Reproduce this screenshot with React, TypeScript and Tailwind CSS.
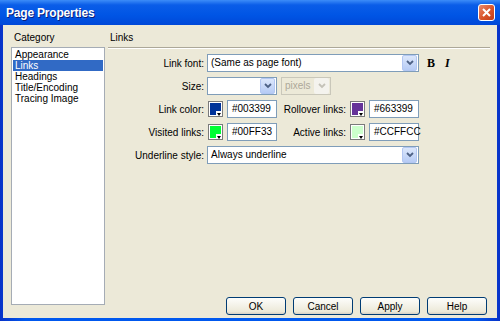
import React from 'react';

const FONT = { fontFamily: '"Liberation Sans", Arial, sans-serif' };

const CATEGORIES = ['Appearance', 'Links', 'Headings', 'Title/Encoding', 'Tracing Image'];

function Chevron({ disabled }: { disabled?: boolean }) {
  return (
    <svg width="8" height="6" viewBox="0 0 8 6">
      <path d="M1 1 L4 4 L7 1" fill="none" stroke={disabled ? '#c4c2b8' : '#4d6185'} strokeWidth="1.8" />
    </svg>
  );
}

function Select({ w, value, disabled }: { w: string; value?: string; disabled?: boolean }) {
  return (
    <div
      className={`${w} h-[18px] flex items-center border ${
        disabled ? 'border-[#c9c7ba] bg-[#ECE9D8] text-[#aca899]' : 'border-[#7f9db9] bg-white text-black'
      }`}
    >
      <span className="flex-1 pl-[3px] truncate leading-none">{value}</span>
      <span
        className={`w-[15px] h-[16px] mr-px flex items-center justify-center rounded-[2px] ${
          disabled ? 'bg-[#f4f3ee]' : 'bg-[linear-gradient(#dce7fb,#b6cbf5)] border border-[#b3c7f2]'
        }`}
      >
        <Chevron disabled={disabled} />
      </span>
    </div>
  );
}

function Swatch({ color }: { color: string }) {
  return (
    <div className="relative w-[15px] h-[16px] border border-[#7a7a7a] bg-white">
      <div className="absolute inset-[1px]" style={{ background: color }} />
      <div className="absolute right-0 bottom-0 w-[6px] h-[5px] bg-white flex items-end justify-center">
        <div className="w-0 h-0 border-l-[2px] border-r-[2px] border-t-[3px] border-l-transparent border-r-transparent border-t-black" />
      </div>
    </div>
  );
}

function ColorField({ color }: { color: string }) {
  return (
    <div className="flex items-center gap-[4px] pl-px">
      <Swatch color={color} />
      <div className="w-[50px] h-[18px] border border-[#7f9db9] bg-white flex items-center pl-[4px] leading-none">
        {color}
      </div>
    </div>
  );
}

function Label({ children, w = 'w-[99px]' }: { children: React.ReactNode; w?: string }) {
  return <span className={`${w} text-right pr-[3px] shrink-0`}>{children}</span>;
}

function Btn({ children }: { children: React.ReactNode }) {
  return (
    <div className="w-[60px] h-[18px] rounded-[3px] border border-[#003c74] bg-[linear-gradient(#fdfdfb,#ece9d8_85%,#d6d0c5)] flex items-center justify-center">
      {children}
    </div>
  );
}

export default function App() {
  return (
    <div
      className="w-[500px] h-[321px] flex flex-col bg-[linear-gradient(90deg,#0832c8,#0058ee_5%,#0058ee_95%,#0832c8)] text-[10px] text-black overflow-hidden"
      style={FONT}
    >
      <div className="h-[25px] shrink-0 flex items-center pl-[6px] pr-[5px] bg-[linear-gradient(#3c8cf8,#0a5de8_20%,#0055e5_60%,#0048d8)]">
        <span className="flex-1 text-white font-bold text-[12px] tracking-[-0.2px] [text-shadow:1px_1px_0_#0a1e7a]">
          Page Properties
        </span>
        <div className="w-[17px] h-[17px] rounded-[3px] border border-white bg-[linear-gradient(135deg,#e98a6e,#d9542a_55%,#c03c18)] flex items-center justify-center">
          <svg width="9" height="9" viewBox="0 0 9 9">
            <path d="M1 1 L8 8 M8 1 L1 8" stroke="white" strokeWidth="2" />
          </svg>
        </div>
      </div>

      <div className="flex-1 mx-[3px] mb-[3px] bg-[#ECE9D8] flex">
        <div className="w-[102px] shrink-0 pl-[8px] flex flex-col">
          <div className="h-[22px] flex items-end pl-[3px] pb-[2px]">Category</div>
          <div className="flex-1 mb-[13px] bg-white border border-[#a5acb5] pt-[1px] px-px leading-[11px]">
            {CATEGORIES.map((c) => (
              <div
                key={c}
                className={`h-[11px] pl-[2px] ${c === 'Links' ? 'bg-[#316ac5] text-white' : ''}`}
              >
                {c}
              </div>
            ))}
          </div>
        </div>

        <div className="flex-1 flex flex-col pl-[3px] pr-[8px]">
          <div className="h-[22px] flex items-end pl-[2px] pb-[2px]">Links</div>
          <div className="h-px mr-[-1px] bg-[#aca899] border-b border-white box-content" />

          <div className="flex flex-col gap-[5px] pt-[5px]">
            <div className="flex items-center">
              <Label>Link font:</Label>
              <Select w="w-[212px]" value="(Same as page font)" />
              <span className="ml-[8px] font-bold text-[12px]" style={{ fontFamily: '"Liberation Serif", serif' }}>
                B
              </span>
              <span
                className="ml-[10px] font-bold italic text-[12px]"
                style={{ fontFamily: '"Liberation Serif", serif' }}
              >
                I
              </span>
            </div>

            <div className="flex items-center">
              <Label>Size:</Label>
              <Select w="w-[70px]" />
              <span className="ml-[4px]">
                <Select w="w-[50px]" value="pixels" disabled />
              </span>
            </div>

            <div className="flex items-center">
              <Label>Link color:</Label>
              <ColorField color="#003399" />
              <Label w="w-[72px]">Rollover links:</Label>
              <ColorField color="#663399" />
            </div>

            <div className="flex items-center">
              <Label>Visited links:</Label>
              <ColorField color="#00FF33" />
              <Label w="w-[72px]">Active links:</Label>
              <ColorField color="#CCFFCC" />
            </div>

            <div className="flex items-center">
              <Label>Underline style:</Label>
              <Select w="w-[212px]" value="Always underline" />
            </div>
          </div>

          <div className="flex-1" />

          <div className="flex justify-end gap-[7px] mb-[3px] mr-[2px]">
            <Btn>OK</Btn>
            <Btn>Cancel</Btn>
            <Btn>Apply</Btn>
            <Btn>Help</Btn>
          </div>
        </div>
      </div>
    </div>
  );
}
